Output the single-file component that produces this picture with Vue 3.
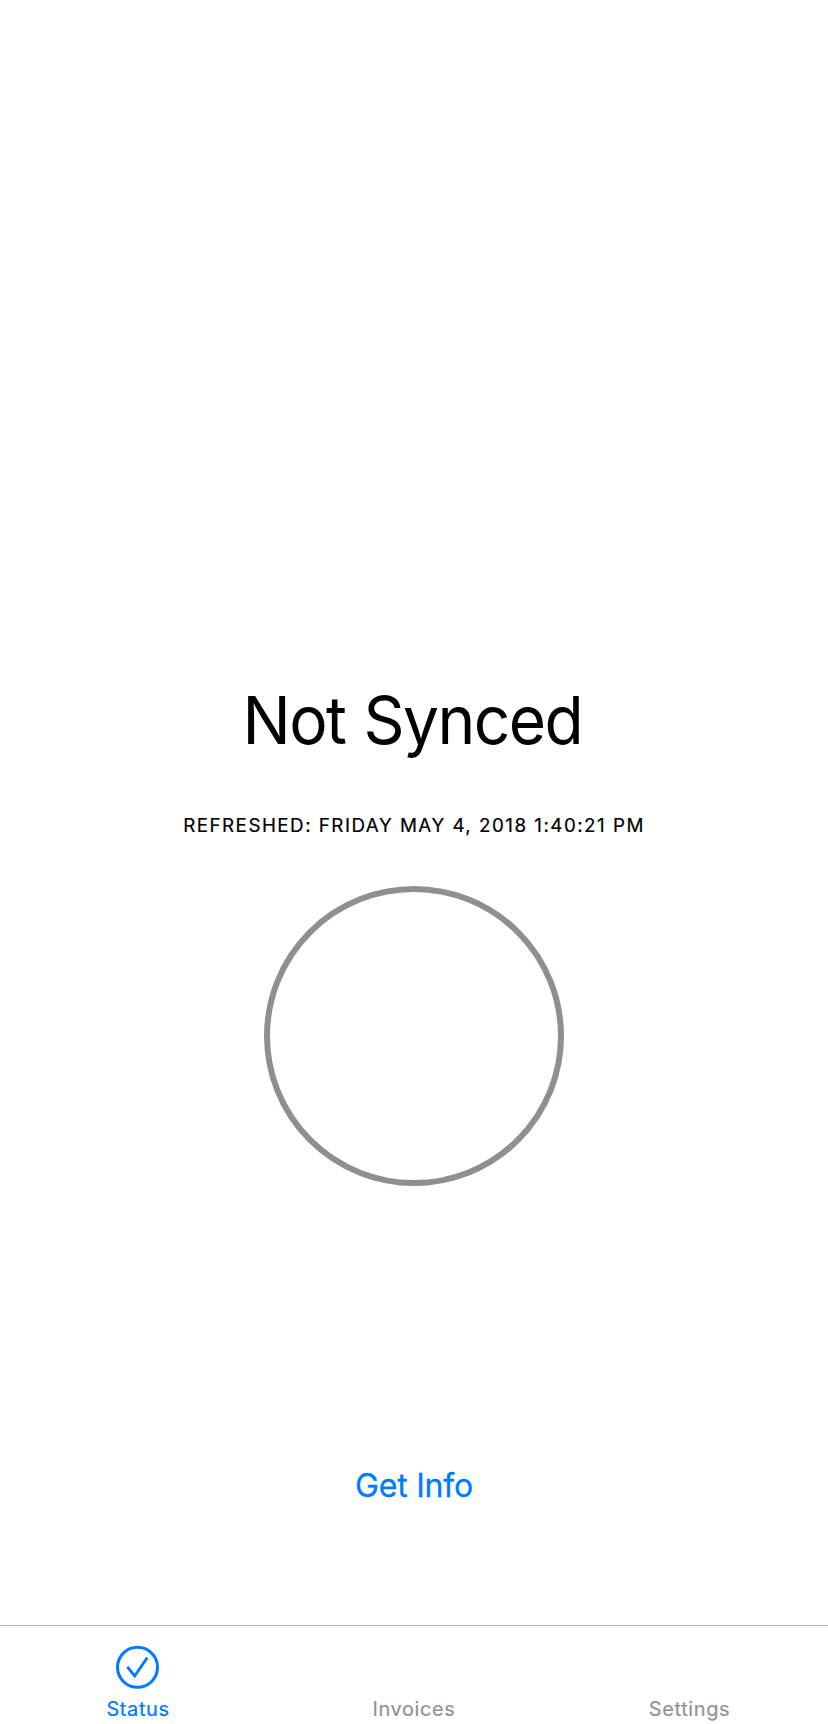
<script setup>
const tabs = [
  { name: 'Status', active: true },
  { name: 'Invoices', active: false },
  { name: 'Settings', active: false },
]
</script>

<template>
  <div class="screen">
    <main class="content">
      <h1>Not Synced</h1>
      <p class="refreshed">REFRESHED: FRIDAY MAY 4, 2018 1:40:21 PM</p>
      <div class="ring"></div>
      <button class="info">Get Info</button>
    </main>
    <nav class="tabs">
      <div v-for="tab in tabs" :key="tab.name" class="tab" :class="{ active: tab.active }">
        <svg v-if="tab.active" class="icon" width="44" height="44" viewBox="0 0 44 44" fill="none" stroke="currentColor">
          <circle cx="21.5" cy="22.3" r="20" stroke-width="3" />
          <path d="M12.2 23L18.7 31L30.5 13.8" stroke-width="2.8" stroke-linecap="square" stroke-linejoin="miter" />
        </svg>
        <span :class="tab.name.toLowerCase()">{{ tab.name }}</span>
      </div>
    </nav>
  </div>
</template>

<style>
body { margin: 0; }
</style>
<style scoped>
.screen { width: 828px; height: 1724px; display: flex; flex-direction: column; background: #fff; font-family: Inter, sans-serif; overflow: hidden; color: #000; }
.content { flex: 1; display: flex; flex-direction: column; align-items: center; }
h1 { margin: 678px 4px 0 0; font-size: 66.5px; line-height: 84px; font-weight: 400; letter-spacing: -1.6px; word-spacing: 1.5px; transform: scaleX(.963); white-space: nowrap; }
.refreshed { margin: 52px 0 0; font-size: 18.8px; line-height: 24px; font-weight: 400; letter-spacing: 1.48px; white-space: nowrap; -webkit-text-stroke: .2px #000; }
.ring { margin-top: 48px; width: 300px; height: 300px; box-sizing: border-box; border: 6px solid #8e8e93; border-radius: 50%; }
.info { margin-top: 280px; padding: 0; border: 0; background: none; color: #007aff; font: 400 32px/40px Inter, sans-serif; letter-spacing: -.2px; -webkit-text-stroke: .3px #007aff; }
.tabs { height: 98px; border-top: 1px solid #b2b2b2; display: flex; }
.tab { flex: 1; display: flex; flex-direction: column; align-items: center; justify-content: flex-end; color: #929292; font-size: 20px; line-height: 24px; font-weight: 400; letter-spacing: .6px; padding-bottom: 3px; -webkit-text-stroke: .2px currentColor; }
.active { color: #007aff; }
.icon { margin-bottom: 8px; }
.settings { margin-right: 1px; }
</style>
